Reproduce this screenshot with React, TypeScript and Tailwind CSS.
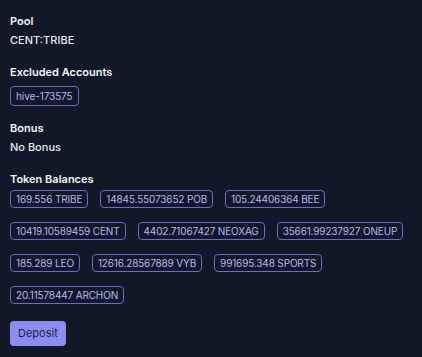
import React from 'react';

const balances = [
  '169.556 TRIBE',
  '14845.55073652 POB',
  '105.24406364 BEE',
  '10419.10589459 CENT',
  '4402.71067427 NEOXAG',
  '35661.99237927 ONEUP',
  '185.289 LEO',
  '12616.28567889 VYB',
  '991695.348 SPORTS',
  '20.11578447 ARCHON',
];

function Field({ label, children }: { label: string; children: React.ReactNode }) {
  return (
    <div>
      <div className="text-[11px] leading-[19px] font-semibold text-gray-100">{label}</div>
      {children}
    </div>
  );
}

export default function App() {
  return (
    <div
      className="min-h-[357px] w-[422px] bg-[#111827] px-[10px] pt-[12px] text-gray-100"
      style={{ fontFamily: 'Inter, "Noto Sans", sans-serif' }}
    >
      <div className="flex flex-col gap-[13px]">
        <Field label="Pool">
          <div className="text-[11px] leading-[19px] font-medium text-gray-200">CENT:TRIBE</div>
        </Field>

        <Field label="Excluded Accounts">
          <span className="mt-[1px] inline-block rounded-[4px] border border-[#6b6fc4] px-[5px] text-[10px] leading-[18px] tracking-[-0.1px] text-[#b4b9f2]">
            hive-173575
          </span>
        </Field>

        <Field label="Bonus">
          <div className="text-[11px] leading-[19px] font-medium text-gray-200">No Bonus</div>
        </Field>

        <Field label="Token Balances">
          <div className="mt-[1px] flex flex-wrap gap-x-[12px] gap-y-[14px]">
            {balances.map((b) => (
              <span
                key={b}
                className="rounded-[4px] border border-[#6b6fc4] px-[5px] text-[10px] leading-[16px] tracking-[-0.15px] text-[#b4b9f2]"
              >
                {b}
              </span>
            ))}
          </div>
        </Field>
      </div>

      <button className="mt-[17px] h-[25px] rounded-[4px] bg-[#8b8ef0] px-[8px] text-[11px] text-[#1e1b4b]">
        Deposit
      </button>
    </div>
  );
}
